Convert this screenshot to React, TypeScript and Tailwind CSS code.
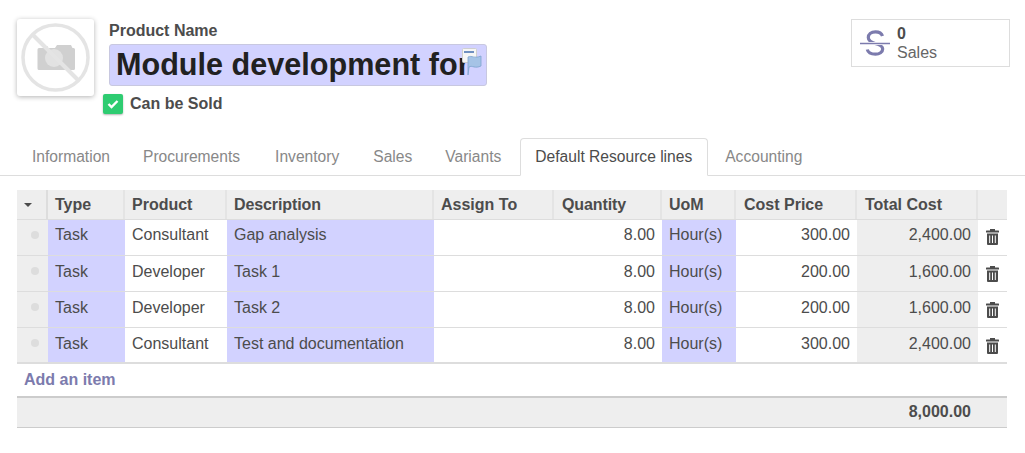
const cols = "grid grid-cols-[31px_77px_102px_207px_120px_108px_74px_121px_121px_29px]";

const lines = [
	["Task", "Consultant", "Gap analysis", "8.00", "Hour(s)", "300.00", "2,400.00"],
	["Task", "Developer", "Task 1", "8.00", "Hour(s)", "200.00", "1,600.00"],
	["Task", "Developer", "Task 2", "8.00", "Hour(s)", "200.00", "1,600.00"],
	["Task", "Consultant", "Test and documentation", "8.00", "Hour(s)", "300.00", "2,400.00"],
];

const tabs = [
	{ name: "Information", gap: "mr-px" },
	{ name: "Procurements", gap: "mr-[3px]" },
	{ name: "Inventory", gap: "mr-[2px]" },
	{ name: "Sales", gap: "mr-px" },
	{ name: "Variants", gap: "mr-[2px]" },
	{ name: "Default Resource lines", gap: "mr-px" },
	{ name: "Accounting", gap: "mr-px" },
];

function NoImage() {
	return (
		<svg width="69" height="69" viewBox="0 0 69 69">
			<path fill="#d0d0d0" d="M18 25h4v-1.500h5V25h7l2-3h14l1.500 3h1a1.500 1.500 0 0 1 1.500 1.500v19a1.500 1.500 0 0 1-1.500 1.500H18a1.500 1.500 0 0 1-1.500-1.500v-19A1.500 1.500 0 0 1 18 25z" />
			<circle cx="33" cy="35" r="9" fill="#e2e2e2" />
			<circle cx="34.500" cy="34.500" r="32.500" fill="none" stroke="#e4e4e4" strokeWidth="3.500" />
			<path d="M11 11L58 58" stroke="#e4e4e4" strokeWidth="4" />
		</svg>
	);
}

function TranslateIcon() {
	return (
		<svg width="20" height="27" viewBox="0 0 20 27">
			<rect x="0.500" y="0.500" width="14" height="14" rx="1" fill="#f6f6f6" stroke="#cfcfcf" />
			<rect x="2" y="3" width="10" height="2" fill="#6f8fc0" />
			<path d="M6 9c4-2 6 2 13-1v10c-6 3-9-1-12 1l-1 8z" fill="#a5c3e6" stroke="#7ea3cf" strokeWidth="0.800" />
		</svg>
	);
}

function SalesIcon() {
	return (
		<svg width="30" height="28" viewBox="0 0 30 28" fill="none" stroke="#7c7bad">
			<path d="M22.500 7C21.500 4 18.500 2.800 15.500 2.800 11 2.800 8.300 5.500 8.300 8.500 8.300 12 12 13.500 15 14.500 19 15.500 22.700 17 22.700 20 22.700 23 19.500 25.200 15.500 25.200 11 25.200 8 23.500 7.300 20.500" strokeWidth="3.200" />
			<path d="M0 14.500h30" stroke="#fff" strokeWidth="3" />
			<path d="M0 14.500h30" strokeWidth="1.500" />
		</svg>
	);
}

function TrashIcon() {
	return (
		<svg width="13" height="16" viewBox="0 0 13 16" fill="#4c4c4c">
			<path d="M4 0h5v1.500h3.500a.5.5 0 0 1 .5.500v1.500H0V2a.5.5 0 0 1 .5-.5H4z" />
			<path fillRule="evenodd" d="M1 4.500h11V15a1 1 0 0 1-1 1H2a1 1 0 0 1-1-1zM3.200 6.500v7.500h1V6.500zM6 6.500v7.500h1V6.500zM8.800 6.500v7.500h1V6.500z" />
		</svg>
	);
}

export default function App() {
	return (
		<div className="w-[1025px] h-[453px] bg-white overflow-hidden text-[16px] leading-[22px] text-[#4c4c4c] font-['Liberation_Sans',Arial,sans-serif]">
			<div className="flex h-[138px] pl-[17px] pr-[15px] pt-[19px]">
				<div className="w-[77px] h-[77px] flex items-center justify-center bg-white rounded-[3px] shadow-[0_1px_5px_rgba(0,0,0,0.3)]">
					<NoImage />
				</div>
				<div className="ml-[9px] w-[378px] relative">
					<div className="ml-[6px] font-bold leading-[24px]">Product Name</div>
					<div className="ml-[6px] relative w-[378px] h-[42px] mt-px bg-[#d2d2ff] border border-[#c8c8e0] rounded-[3px] pl-[6px] pr-[16px] overflow-hidden">
						<div className="overflow-hidden whitespace-nowrap text-[30.600px] leading-[39px] font-bold text-[#212121]">Module development for project</div>
						<div className="absolute right-[4px] top-[3px]"><TranslateIcon /></div>
					</div>
					<div className="flex mt-[8px]">
						<div className="w-[20px] h-[20px] flex items-center justify-center rounded-[2px] bg-[#2ecc71] shadow-[0_1px_2px_rgba(0,0,0,0.3)]">
							<svg width="12" height="10" viewBox="0 0 12 10" fill="none" stroke="#fff" strokeWidth="2.400"><path d="M1.500 5l3 3 6-6" /></svg>
						</div>
						<span className="ml-[7px] font-bold -mt-px">Can be Sold</span>
					</div>
				</div>
				<div className="ml-auto w-[159px] h-[48px] flex items-center border border-[#ddd] pl-[8px]">
					<SalesIcon />
					<div className="ml-[7px] leading-[19px]">
						<div className="font-bold">0</div>
						<div className="text-[#666]">Sales</div>
					</div>
				</div>
			</div>

			<div className="flex h-[38px] pl-[16px] border-b border-[#ddd] text-[15.600px]">
				{tabs.map((t) =>
					t.name === "Default Resource lines" ? (
						<div key={t.name} className={"h-[38px] pl-[14px] pr-[15px] ml-px flex items-center bg-white border border-[#ddd] border-b-white rounded-t-[4px] text-[#4c4c4c] " + t.gap}>{t.name}</div>
					) : (
						<div key={t.name} className={"h-[37px] px-[16px] flex items-center text-[#888] " + t.gap}>{t.name}</div>
					)
				)}
			</div>

			<div className="w-[990px] ml-[17px] mt-[14px]">
				<div className={cols + " h-[30px] bg-[#eee] font-bold border-b border-[#ddd]"}>
					<div className="flex items-center justify-center border-r-2 border-[#ddd] pr-[7px]">
						<span className="w-0 h-0 border-x-[4px] border-x-transparent border-t-[4px] border-t-[#4c4c4c]" />
					</div>
					<div className="flex items-center pl-[7px] border-r-2 border-[#e4e4e4]">Type</div>
					<div className="flex items-center pl-[7px] border-r-2 border-[#e4e4e4]">Product</div>
					<div className="flex items-center pl-[7px] border-r-2 border-[#e4e4e4] tracking-[-0.1px]">Description</div>
					<div className="flex items-center pl-[7px] border-r-2 border-[#e4e4e4]">Assign To</div>
					<div className="flex items-center pl-[8px] border-r-2 border-[#e4e4e4] tracking-[-0.1px]">Quantity</div>
					<div className="flex items-center pl-[7px] border-r-2 border-[#e4e4e4]">UoM</div>
					<div className="flex items-center pl-[8px] border-r-2 border-[#e4e4e4]">Cost Price</div>
					<div className="flex items-center pl-[8px] border-r-2 border-[#e4e4e4]">Total Cost</div>
					<div />
				</div>
				{lines.map((r, i) => (
					<div key={i} className={cols + " h-[36px] " + (i === 3 ? "border-b-2 border-[#ddd]" : "border-b border-[#ddd]")}>
						<div className="bg-[#eee] flex items-center justify-center pb-[5px] pl-[5px]">
							<span className="w-[8px] h-[8px] rounded-full bg-[#ddd]" />
						</div>
						<div className={"bg-[#d2d2ff] pl-[7px] " + (i === 0 ? "pt-[4px]" : "pt-[5px]")}>{r[0]}</div>
						<div className={"pl-[7px] " + (i === 0 ? "pt-[4px]" : "pt-[5px]")}>{r[1]}</div>
						<div className={"bg-[#d2d2ff] pl-[7px] " + (i === 0 ? "pt-[4px]" : "pt-[5px]")}>{r[2]}</div>
						<div />
						<div className={"text-right pr-[7px] " + (i === 0 ? "pt-[4px]" : "pt-[5px]")}>{r[3]}</div>
						<div className={"bg-[#d2d2ff] pl-[7px] " + (i === 0 ? "pt-[4px]" : "pt-[5px]")}>{r[4]}</div>
						<div className={"text-right pr-[7px] " + (i === 0 ? "pt-[4px]" : "pt-[5px]")}>{r[5]}</div>
						<div className={"bg-[#eee] text-right pr-[7px] " + (i === 0 ? "pt-[4px]" : "pt-[5px]")}>{r[6]}</div>
						<div className={"flex items-center justify-center " + (i === 0 ? "pb-px" : "pt-px")}><TrashIcon /></div>
					</div>
				))}
				<div className="h-[32px] pl-[7px] pt-[5px] font-bold text-[#7c7bad]">Add an item</div>
				<div className="h-[32px] bg-[#eee] border-t-2 border-b border-t-[#ccc] border-b-[#ccc] pr-[36px] pt-[3px] text-right font-bold">8,000.00</div>
			</div>
		</div>
	);
}
